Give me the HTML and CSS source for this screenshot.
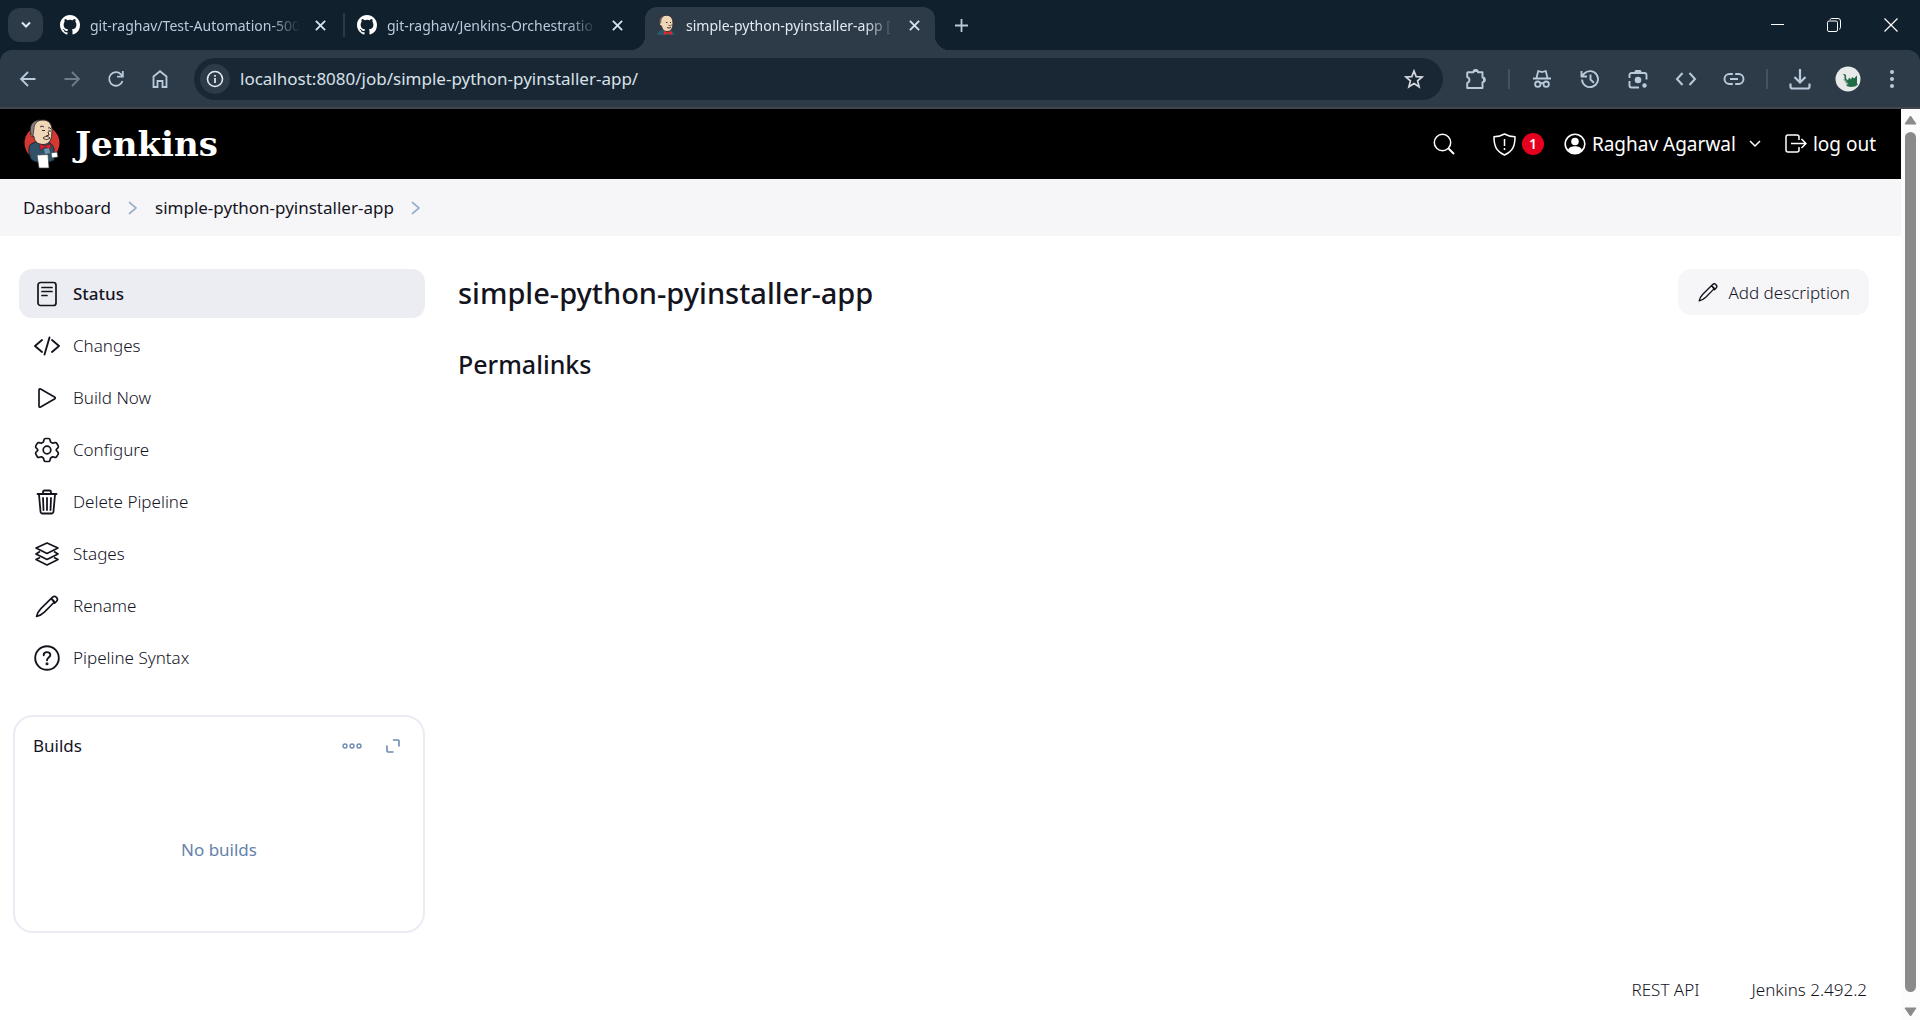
FILE: index.html
```html
<!DOCTYPE html>
<html lang="en">
<head>
<meta charset="utf-8">
<title>simple-python-pyinstaller-app [Jenkins]</title>
<link rel="stylesheet" href="styles.css">
</head>
<body>
<svg width="0" height="0" class="defs" aria-hidden="true">
  <symbol id="github" viewBox="0 0 16 16"><path fill="currentColor" d="M8 0C3.58 0 0 3.58 0 8c0 3.54 2.29 6.53 5.47 7.59.4.07.55-.17.55-.38 0-.19-.01-.82-.01-1.49-2.01.37-2.53-.49-2.69-.94-.09-.23-.48-.94-.82-1.13-.28-.15-.68-.52-.01-.53.63-.01 1.08.58 1.23.82.72 1.21 1.87.87 2.33.66.07-.52.28-.87.51-1.07-1.78-.2-3.64-.89-3.64-3.95 0-.87.31-1.59.82-2.15-.08-.2-.36-1.02.08-2.12 0 0 .67-.21 2.2.82a7.6 7.6 0 0 1 4 0c1.53-1.04 2.2-.82 2.2-.82.44 1.1.16 1.92.08 2.12.51.56.82 1.27.82 2.15 0 3.07-1.87 3.75-3.65 3.95.29.25.54.73.54 1.48 0 1.07-.01 1.93-.01 2.2 0 .21.15.46.55.38A8.01 8.01 0 0 0 16 8c0-4.42-3.58-8-8-8z"/></symbol>
  <symbol id="close" viewBox="0 0 10 10"><path d="M.8.8l8.400 8.400M9.200.8L.8 9.200" stroke="currentColor" stroke-width="1.700" fill="none"/></symbol>
  <symbol id="chevron-right" viewBox="0 0 12 16"><path d="M2.500 2.500l6.500 5.500-6.500 5.500" fill="none" stroke="currentColor" stroke-width="1.700" stroke-linecap="round" stroke-linejoin="round"/></symbol>
  <symbol id="pencil" viewBox="0 0 512 512"><path d="M340 105L135 308C95 350 62 400 50 462c62-12 112-45 154-85l203-205zM340 105l20-20a58 58 0 0 1 82 0 58 58 0 0 1 0 82l-35 35zM335 110l67 67" fill="none" stroke="currentColor" stroke-width="32" stroke-linejoin="round" stroke-linecap="round"/></symbol>
</svg>

<header class="browser">
  <div class="tabstrip">
    <button class="tab-search" aria-label="Search tabs"><svg width="12" height="8" viewBox="0 0 12 8"><path d="M2 1.500l4 4 4-4" fill="none" stroke="#dfe9f3" stroke-width="2"/></svg></button>
    <div class="tab tab-first">
      <svg class="favicon" width="20" height="20"><use href="#github"/></svg>
      <span class="tab-title">git-raghav/Test-Automation-500</span>
      <button class="tab-close" aria-label="Close tab"><svg width="11" height="11"><use href="#close"/></svg></button>
    </div>
    <span class="tab-divider"></span>
    <div class="tab">
      <svg class="favicon" width="20" height="20"><use href="#github"/></svg>
      <span class="tab-title">git-raghav/Jenkins-Orchestratio</span>
      <button class="tab-close" aria-label="Close tab"><svg width="11" height="11"><use href="#close"/></svg></button>
    </div>
    <div class="tab tab-active">
      <svg class="favicon" width="20" height="20" viewBox="0 0 20 20"><path d="M1 20c1-4 4-5 6-5l6 .5c3 0 5 2 6 4.500z" fill="#2f5568"/><path d="M4 6c0-4 3-5.500 6.500-5.500S17 3 17 8s-2 8.500-6 8.500C7 16.500 6 13 5.500 11 3 11 3 7 4 6z" fill="#f0d6b7"/><path d="M3.500 10C2 5 4 1 9 .5 6.500 2 5 4 5.300 7.500z" fill="#6d6b6d"/><path d="M3.500 10C2 5 4 1 9 .4c5-1 8 2 8 7.600s-2 8.500-6 8.500C7 16.500 6 13 5.500 11zM10 7.500h1.500M14 7.500h1M11 12.500c1 .6 3 .6 4 0" fill="none" stroke="#3a3032" stroke-width="1"/><path d="M12.500 10c1 1 3 1 3.500-.5" stroke="#3a3032" fill="none" stroke-width=".8"/><path d="M8 16l4 1.500L16 16v4l-4-1.500L8 20z" fill="#e0252c"/></svg>
      <span class="tab-title">simple-python-pyinstaller-app [</span>
      <button class="tab-close" aria-label="Close tab"><svg width="11" height="11"><use href="#close"/></svg></button>
    </div>
    <button class="new-tab" aria-label="New tab"><svg width="13" height="13" viewBox="0 0 13 13"><path d="M6.500 0v13M0 6.500h13" stroke="currentColor" stroke-width="1.800"/></svg></button>
    <div class="window-controls">
      <button aria-label="Minimize"><svg width="14" height="14" viewBox="0 0 14 14"><path d="M1 6.500h13" stroke="#fff"/></svg></button>
      <button aria-label="Restore"><svg width="14" height="14" viewBox="0 0 14 14" fill="none" stroke="#fff"><rect x=".5" y="3" width="10" height="10.500" rx="1.500"/><path d="M3 1.800C3.300 1 3.800.500 4.500.500h6.500a2.500 2.500 0 0 1 2.500 2.500v6.500c0 .8-.5 1.500-1.200 1.700"/></svg></button>
      <button aria-label="Close window"><svg width="14" height="14" viewBox="0 0 14 14"><path d="M.5.500l13 13M13.500.500l-13 13" stroke="#fff" stroke-width="1.200"/></svg></button>
    </div>
  </div>
  <div class="toolbar">
    <div class="nav-buttons">
      <button aria-label="Back"><svg width="18" height="18" viewBox="0 0 18 18" fill="none" stroke="currentColor" stroke-width="1.800"><path d="M16.500 9H2M9 2L2 9l7 7"/></svg></button>
      <button class="dim" aria-label="Forward"><svg width="18" height="18" viewBox="0 0 18 18" fill="none" stroke="currentColor" stroke-width="1.800"><path d="M1.500 9H16M9 2l7 7-7 7"/></svg></button>
      <button aria-label="Reload"><svg width="18" height="18" viewBox="0 0 18 18" fill="none" stroke="currentColor" stroke-width="1.800"><path d="M15.500 11A6.800 6.800 0 1 1 14 4.300l2 2.200M15.800 1v5.700h-5.700"/></svg></button>
      <button aria-label="Home"><svg width="18" height="20" viewBox="0 0 18 20" fill="none" stroke="currentColor" stroke-width="1.800"><path d="M2.500 18V7.500L9 2.200l6.500 5.300V18h-4v-6h-5v6z"/></svg></button>
    </div>
    <div class="omnibox">
      <span class="site-info"><svg width="18" height="18" viewBox="0 0 18 18"><circle cx="9" cy="9" r="7.500" fill="none" stroke="#e3eaf2" stroke-width="1.600"/><path d="M9 8v5M9 5v1.800" stroke="#e3eaf2" stroke-width="1.700"/></svg></span>
      <input class="url" aria-label="Address" value="localhost:8080/job/simple-python-pyinstaller-app/">
      <button aria-label="Bookmark"><svg width="20" height="20" viewBox="0 0 20 20"><path d="M10 2l2.200 5.600 6 .4-4.600 3.900 1.500 5.900L10 14.500l-5.100 3.300 1.500-5.900L1.800 8l6-.4z" fill="none" stroke="#d5d8dc" stroke-width="1.700"/></svg></button>
    </div>
    <div class="extensions">
      <button aria-label="Extensions"><svg width="22" height="22" viewBox="0 0 22 22"><path d="M3 4.200h5.500a2.200 2.200 0 0 1 4.400 0h4.600v5.300a2.200 2.200 0 0 1 0 4.600V20H2.200v-5a3 3 0 0 0 0-5.800V5a.8.8 0 0 1 .8-.8z" fill="none" stroke="currentColor" stroke-width="1.900" stroke-linejoin="round"/><path d="M8 4a2.400 2.400 0 0 1 4.800 0zM18 9.500a2.400 2.400 0 0 1 0 4.800z" fill="currentColor"/></svg></button>
      <span class="bar-divider"></span>
      <button aria-label="Incognito"><svg width="20" height="20" viewBox="0 0 20 20" fill="none" stroke="currentColor" stroke-width="1.800"><path d="M4.500 9l1.700-7 3.800 1 3.800-1 1.700 7M1 9.500h18M8.600 14.500q1.400-1 2.800 0"/><circle cx="5.800" cy="15.200" r="2.700"/><circle cx="14.200" cy="15.200" r="2.700"/></svg></button>
      <button aria-label="History"><svg width="20" height="20" viewBox="0 0 20 20" fill="none" stroke="currentColor" stroke-width="1.900"><path d="M2 10.500a8 8 0 1 0 2.300-6L1.500 7.300M1.500 2v5.500H7M10.500 5.500v5l3.500 3.400"/></svg></button>
      <button aria-label="Search with Lens"><svg width="20" height="20" viewBox="0 0 20 20" fill="none" stroke="currentColor" stroke-width="1.900"><path d="M1.500 9V6a2 2 0 0 1 2-2H6M14 4h2.500a2 2 0 0 1 2 2v4.500M1.500 12v4.500a2 2 0 0 0 2 2H11"/><path d="M5 4.900L7.500 1h5L15 4.900z" fill="currentColor" stroke="none"/><circle cx="10" cy="11" r="3.300" fill="currentColor" stroke="none"/><circle cx="16.500" cy="16.500" r="2.200" fill="currentColor" stroke="none"/></svg></button>
      <button aria-label="Developer tools"><svg width="22" height="20" viewBox="0 0 22 20" fill="none" stroke="currentColor" stroke-width="2"><path d="M7.500 4L2 10l5.500 6M14.500 4l5.500 6-5.500 6"/></svg></button>
      <button aria-label="Copy link"><svg width="22" height="20" viewBox="0 0 22 20" fill="none" stroke="currentColor" stroke-width="1.900"><path d="M9.800 5H6.500a5 5 0 0 0 0 10h3.300M12.200 5h3.300a5 5 0 0 1 0 10h-3.300M7 10h8"/></svg></button>
      <span class="bar-divider"></span>
      <button aria-label="Downloads"><svg width="22" height="24" viewBox="0 0 22 24" fill="none" stroke="currentColor" stroke-width="2.200"><path d="M11 2v13M5.500 10l5.500 5.500 5.500-5.500M1.500 16.500v3q0 2 2 2h15q2 0 2-2v-3"/></svg></button>
      <button aria-label="Profile"><svg width="26" height="26" viewBox="0 0 26 26"><circle cx="13" cy="13" r="12.500" fill="#e8eaea"/><path d="M8 8c3-.5 3.500 1.500 3 4.500l2 2 1-3 2 2 1-2.500 2 1.500 3-3v8l1 1-3 2-4.500.5-4-1 .5-2-2.500-4 0-4z" fill="#1f6b45"/><path d="M8 13l4 6 1.500-1-4-5z" fill="#9aaba4"/></svg></button>
      <button aria-label="Menu"><svg width="6" height="20" viewBox="0 0 6 20" fill="currentColor"><circle cx="3" cy="3" r="2"/><circle cx="3" cy="10" r="2"/><circle cx="3" cy="17" r="2"/></svg></button>
    </div>
  </div>
</header>

<div class="viewport">
  <div class="page">
    <header class="jenkins-header">
      <a class="brand" href="#" aria-label="Jenkins">
        <svg width="38" height="52" viewBox="0 0 38 52"><ellipse cx="19" cy="25" rx="17.500" ry="17.500" fill="#d33833"/><path d="M7 27c2-2 5-3 8-3h9c4 1 6 3 7 7v11c-4 3-19 4-23-1-2-5-3-10-1-14z" fill="#2f5268" stroke="#1b242b"/><path d="M8 15c0-9 5-13 12-13 6 0 9 4 9 11 0 8-2 13.500-9 13.500-6 0-9-4-9-8-3 0-4-1-3-3.500z" fill="#f0d6b7" stroke="#332e2d"/><path d="M8 16C6 8 9 2.500 17 2c-4 2-6 5-6 9l-1 7c-1-1-1-1-2-2z" fill="#857f7d" stroke="#332e2d" stroke-width=".7"/><path d="M17 9q2-2 4 0M25 10q2-1 3 1M19 12.500h3M25 13h3M25 14l1 3-3 1M20 20c2-2 5-2 7 0-2 2-5 2-7 0z" fill="none" stroke="#332e2d"/><path d="M17 26l5 2 5-2 1 5-6-2-5 3z" fill="#e0252c" stroke="#6c1417" stroke-width=".6"/><path d="M21 31l5-1 1 5-5 1z" fill="#6f93ad"/><path d="M28 35l6-1 1 5-6 1zM14 37l11-.5 1 13.500H16z" fill="#fff" stroke="#444" stroke-width=".7"/></svg>
        <span class="brand-name">Jenkins</span>
      </a>
      <nav class="header-actions">
        <button class="search" aria-label="Search"><svg width="22" height="22" viewBox="0 0 22 22" fill="none" stroke="currentColor" stroke-width="1.500"><circle cx="9.500" cy="9.500" r="8.200"/><path d="M15.500 15.500L21 21" stroke-width="2"/></svg></button>
        <a class="alerts" href="#" aria-label="Security warnings"><svg width="23" height="23" viewBox="0 0 23 23" fill="none" stroke="currentColor" stroke-width="1.500" stroke-linejoin="round"><path d="M11.500 1Q7 3.500 1 3.800C1 13 3 18 11.500 22 20 18 22 13 22 3.800 16 3.500 11.500 1 11.500 1zM11.500 6v7M11.500 15v2"/></svg><span class="badge">1</span></a>
        <a class="user" href="#"><svg width="22" height="22" viewBox="0 0 22 22"><circle cx="11" cy="11" r="9.800" fill="none" stroke="#fff" stroke-width="1.600"/><circle cx="11" cy="8.500" r="3.800" fill="#fff"/><path d="M4 17c1-3 4-3.800 7-3.800s6 .8 7 3.800l-3 3H7z" fill="#fff"/></svg><span>Raghav Agarwal</span></a>
        <button class="caret" aria-label="User menu"><svg width="12" height="8" viewBox="0 0 12 8"><path d="M1 1l5 5 5-5" fill="none" stroke="#fff" stroke-width="1.500"/></svg></button>
        <a class="logout" href="#"><svg width="22" height="20" viewBox="0 0 22 20" fill="none" stroke="currentColor" stroke-width="1.500" stroke-linejoin="round"><path d="M14 6V3q0-2-2-2H3Q1 1 1 3v13q0 2 2 2h9q2 0 2-2v-3M6 9.500h15M16.500 5l4.500 4.500-4.500 4.500"/></svg><span>log out</span></a>
      </nav>
    </header>
    <nav class="breadcrumbs" aria-label="Breadcrumb">
      <a href="#">Dashboard</a>
      <svg width="12" height="16"><use href="#chevron-right"/></svg>
      <a href="#">simple-python-pyinstaller-app</a>
      <svg width="12" height="16"><use href="#chevron-right"/></svg>
    </nav>
    <div class="body">
      <aside class="side">
        <nav class="tasks">
          <a class="task task-active" href="#"><svg width="26" height="26" viewBox="0 0 26 26" fill="none" stroke="currentColor" stroke-width="1.700" stroke-linecap="round"><rect x="4" y="1.500" width="18" height="23" rx="2.500"/><path d="M8 6.500h10M8 10.500h10M8 14.500h5"/></svg>Status</a>
          <a class="task" href="#"><svg width="26" height="26" viewBox="0 0 26 26" fill="none" stroke="currentColor" stroke-width="1.900" stroke-linecap="round" stroke-linejoin="round"><path d="M8 7l-7 6 7 6M18 7l7 6-7 6M15.500 4.500l-5 17"/></svg>Changes</a>
          <a class="task" href="#"><svg width="26" height="26" viewBox="0 0 26 26" fill="none" stroke="currentColor" stroke-width="1.700" stroke-linejoin="round"><path d="M5 5v16q0 1.800 1.600 1L20.500 14q1.500-1 0-2L6.600 4Q5 3.200 5 5z"/></svg>Build Now</a>
          <a class="task" href="#"><svg width="26" height="26" viewBox="0 0 26 26" fill="none" stroke="currentColor" stroke-width="1.700" stroke-linejoin="round"><circle cx="13" cy="13" r="3.800"/><path d="M11.500 1.500h3q1.200 0 1.500 1.200l.6 2.300q1.200.6 2 1.200l2.300-.6q1.200-.3 1.800.7l1.500 2.600q.6 1-.3 1.900L22.300 12.500v1l1.600 1.700q.9.900.3 1.900l-1.500 2.600q-.6 1-1.800.7l-2.300-.6q-.8.600-2 1.200l-.6 2.300q-.3 1.200-1.500 1.200h-3q-1.200 0-1.500-1.200L9.400 21q-1.200-.6-2-1.200l-2.300.6q-1.200.3-1.800-.7l-1.500-2.600q-.6-1 .3-1.900l1.600-1.700v-1l-1.600-1.700q-.9-.9-.3-1.900l1.500-2.600q.6-1 1.800-.7l2.300.6q.8-.6 2-1.200l.6-2.300q.3-1.200 1.500-1.200z"/></svg>Configure</a>
          <a class="task" href="#"><svg width="26" height="26" viewBox="0 0 26 26" fill="none" stroke="currentColor" stroke-width="1.800" stroke-linecap="round" stroke-linejoin="round"><path d="M3.500 5h19M5 5.500l1.500 17q.2 2 2 2h9q1.800 0 2-2L21 5.500M9 5V3q0-1.500 1.500-1.500h5Q17 1.500 17 3v2M13 9v12M9 9l.5 12M17 9l-.5 12"/></svg>Delete Pipeline</a>
          <a class="task" href="#"><svg width="26" height="26" viewBox="0 0 26 26" fill="none" stroke="currentColor" stroke-width="1.700" stroke-linejoin="round"><path d="M13 2l11 5-11 5.500L2 7zM6 10.500L2 13l11 5.500L24 13l-4-2.500M6 16.500L2 18.500 13 24l11-5.500-4-2"/></svg>Stages</a>
          <a class="task" href="#"><svg width="26" height="26"><use href="#pencil"/></svg>Rename</a>
          <a class="task" href="#"><svg width="26" height="26" viewBox="0 0 26 26" fill="none" stroke="currentColor" stroke-width="1.900" stroke-linecap="round"><circle cx="13" cy="13" r="11.800"/><path d="M9.700 10.200c0-4 6.600-4 6.600-.2 0 2.500-3.300 2.500-3.300 5.200"/><circle cx="13" cy="18.800" r=".6" fill="currentColor"/></svg>Pipeline Syntax</a>
        </nav>
        <section class="builds">
          <div class="builds-head">
            <h2>Builds</h2>
            <button aria-label="More options"><svg width="20" height="6" viewBox="0 0 20 6" fill="none" stroke="currentColor" stroke-width="1.400"><circle cx="3" cy="3" r="2"/><circle cx="10" cy="3" r="2"/><circle cx="17" cy="3" r="2"/></svg></button>
            <button aria-label="Expand"><svg width="14" height="14" viewBox="0 0 14 14" fill="none" stroke="currentColor" stroke-width="1.600" stroke-linecap="round" stroke-linejoin="round"><path d="M7.500 1h4.500q1 0 1 1v5M1 7v5q0 1 1 1h5"/></svg></button>
          </div>
          <p class="empty">No builds</p>
        </section>
      </aside>
      <main class="main">
        <div class="title-row">
          <h1>simple-python-pyinstaller-app</h1>
          <button class="describe"><svg width="22" height="22"><use href="#pencil"/></svg>Add description</button>
        </div>
        <h2>Permalinks</h2>
      </main>
    </div>
    <footer class="footer">
      <a href="#">REST API</a>
      <a href="#">Jenkins 2.492.2</a>
    </footer>
  </div>
  <div class="scrollbar" aria-hidden="true">
    <svg width="13" height="10" viewBox="0 0 13 10"><path d="M6.500 1L12 9H1z" fill="#8a8a8a" stroke="#8a8a8a" stroke-linejoin="round"/></svg>
    <span class="thumb"></span>
    <svg width="13" height="10" viewBox="0 0 13 10"><path d="M6.500 9L12 1H1z" fill="#8a8a8a" stroke="#8a8a8a" stroke-linejoin="round"/></svg>
  </div>
</div>
</body>
</html>
```
FILE: styles.css
```css
* { box-sizing: border-box; }

body {
  margin: 0;
  height: 100vh;
  display: flex;
  flex-direction: column;
  overflow: hidden;
  background: #fff;
  color: #14141f;
  font-family: "Noto Sans", "Open Sans", sans-serif;
  font-size: 17px;
}

.defs { position: absolute; }
svg { flex: none; display: block; }
a { color: inherit; text-decoration: none; }
h1, h2, p { margin: 0; }

button {
  display: flex;
  align-items: center;
  justify-content: center;
  padding: 0;
  border: 0;
  background: none;
  color: inherit;
  font: inherit;
}

/* Browser frame */
.browser { background: #11202d; color: #b9cadb; border-bottom: 2px solid #43474b; }

.tabstrip { display: flex; align-items: center; height: 50px; padding: 0 1px 0 8px; }
.tab-search { width: 35px; height: 34px; border-radius: 12px; background: #2d3b48; }

.tab {
  display: flex;
  align-items: center;
  width: 305px;
  height: 36px;
  padding: 0 17px;
  gap: 10px;
  font-size: 14px;
}
.tab-first { width: 300px; padding-right: 12px; }
.tab-divider { width: 2px; height: 24px; margin-right: -5px; background: #2d3b48; }
.favicon { color: #fff; }
.tab-title {
  flex: 1;
  overflow: hidden;
  white-space: nowrap;
  mask-image: linear-gradient(to right, #000 86%, transparent);
}
.tab-close { width: 21px; height: 20px; color: #d5e1ec; }
.tab-active {
  position: relative;
  align-self: flex-end;
  width: 290px;
  height: 43px;
  padding: 0 10px 7px 11px;
  border-radius: 12px 12px 0 0;
  background: #2d3b48;
  color: #e3eaf1;
}
.tab-active::before, .tab-active::after {
  content: "";
  position: absolute;
  bottom: 0;
  width: 14px;
  height: 14px;
}
.tab-active::before { right: 100%; background: radial-gradient(circle at 0 0, transparent 14px, #2d3b48 14px); }
.tab-active::after { left: 100%; background: radial-gradient(circle at 100% 0, transparent 14px, #2d3b48 14px); }
.new-tab { width: 52px; height: 34px; }
.window-controls { display: flex; margin-left: auto; }
.window-controls button { width: 57px; height: 50px; }

.toolbar {
  display: flex;
  align-items: center;
  height: 57px;
  gap: 20px;
  padding: 0 19px 0 14px;
  border-radius: 12px 12px 0 0;
  background: #2d3b48;
}
.nav-buttons { display: flex; gap: 16px; }
.nav-buttons button { width: 28px; height: 28px; }
.dim { color: #6e7c89; }
.omnibox {
  flex: 1;
  display: flex;
  align-items: center;
  height: 42px;
  padding: 0 19px 0 6px;
  gap: 10px;
  border-radius: 21px;
  background: #182733;
}
.site-info {
  display: flex;
  align-items: center;
  justify-content: center;
  width: 30px;
  height: 30px;
  border-radius: 50%;
  background: #2d3b48;
}
.url { flex: 1; min-width: 0; padding: 0; border: 0; background: none; color: #d9e1e9; font: inherit; }
.extensions { display: flex; align-items: center; gap: 22px; }
.extensions button { min-width: 26px; }
.extensions button:last-child { min-width: 18px; }
.bar-divider { width: 2px; height: 20px; margin: 0 -3px; background: #44525f; }

/* Page */
.viewport { flex: 1; display: flex; min-height: 0; }
.page { flex: 1; display: flex; flex-direction: column; min-width: 0; }

.jenkins-header {
  display: flex;
  align-items: center;
  justify-content: space-between;
  height: 70px;
  padding: 0 25px 0 23px;
  background: #000;
  color: #fff;
}
.brand { display: flex; align-items: center; gap: 14px; }
.brand-name { font: bold 34px/40px "DejaVu Serif", "Noto Serif", serif; }
.header-actions { display: flex; align-items: center; font-size: 19px; }
.header-actions a { display: flex; align-items: center; gap: 6px; }
.search { width: 24px; margin-right: 37px; }
.alerts { margin-right: 20px; }
.badge {
  width: 22px;
  height: 22px;
  border-radius: 50%;
  background: #e6001f;
  font-size: 14px;
  font-weight: 600;
  line-height: 22px;
  text-align: center;
}
.caret { width: 12px; margin: 0 24px 0 13px; }

.breadcrumbs {
  display: flex;
  align-items: center;
  height: 57px;
  padding: 0 23px;
  gap: 16px;
  background: #f6f6f8;
}
.breadcrumbs svg { color: #9db1c9; }

.body { flex: 1; display: flex; gap: 33px; padding: 33px 32px 0 13px; }
.side { width: 412px; }
.tasks { display: flex; flex-direction: column; gap: 3px; padding-left: 6px; }
.task {
  display: flex;
  align-items: center;
  height: 49px;
  padding: 0 15px;
  gap: 13px;
  border-radius: 13px;
  font-weight: 300;
}
.task-active { background: #ecedf3; font-weight: 500; }

.builds {
  display: flex;
  flex-direction: column;
  height: 218px;
  margin-top: 33px;
  border: 2px solid #ebebf3;
  border-radius: 20px;
}
.builds-head { display: flex; align-items: center; padding: 16px 16px 0 18px; gap: 13px; color: #6b8bb0; }
.builds-head h2 { flex: 1; color: #14141f; font-size: 17px; font-weight: 400; line-height: 26px; }
.builds-head button { width: 28px; height: 26px; }
.empty { margin: auto; padding-top: 8px; color: #6482aa; }

.main { flex: 1; }
.title-row { display: flex; align-items: flex-start; justify-content: space-between; }
.main h1 { font-size: 29px; font-weight: 500; line-height: 48px; }
.main h2 { margin-top: 29px; font-size: 25px; font-weight: 500; line-height: 36px; }
.describe {
  height: 46px;
  padding: 0 19px;
  gap: 10px;
  border-radius: 13px;
  background: #f6f6f9;
  font-weight: 300;
}
.footer { display: flex; justify-content: flex-end; gap: 52px; padding: 0 34px 19px; font-weight: 300; }

.scrollbar {
  display: flex;
  flex-direction: column;
  align-items: center;
  width: 19px;
  padding: 6px 0 3px;
  gap: 7px;
  background: #fcfcfc;
}
.scrollbar svg:last-child { margin-top: 8px; }
.thumb { flex: 1; width: 11px; border-radius: 6px; background: #8a8a8a; }
```
